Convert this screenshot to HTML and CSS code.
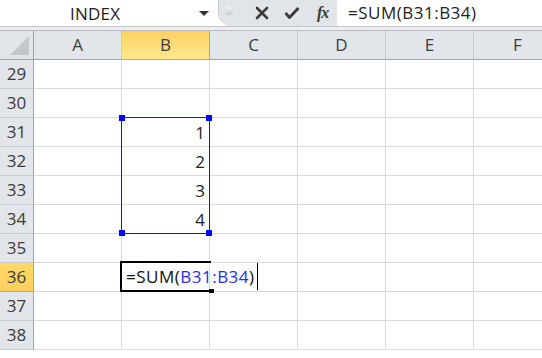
FILE: index.html
```html
<html>

<head>
  <link rel="stylesheet" href="styles.css">
</head>

<body>
  <div class="fbar">
    <div class="namebox">
      <span class="name">INDEX</span>
      <span class="arrow"></span>
    </div>
    <div class="pill">
      <span class="dot"></span>
      <svg class="ico" width="14" height="14" viewBox="0 0 14 14">
        <path d="M2 2 L12 12 M12 2 L2 12" stroke="#3a3a3a" stroke-width="2.6" stroke-linecap="round" />
      </svg>
      <svg class="ico" width="16" height="14" viewBox="0 0 16 14">
        <path d="M1.5 7 L5.5 11.5 L14.5 2" stroke="#3a3a3a" stroke-width="2.8" fill="none" stroke-linejoin="round" />
      </svg>
      <span class="fx">fx</span>
    </div>
    <div class="formula">=SUM(B31:B34)</div>
  </div>
  <div class="gap"></div>

  <div class="sheet">
    <div class="row head">
      <div class="rh corner"><span class="tri"></span></div>
      <div class="ch">A</div>
      <div class="ch sel">B</div>
      <div class="ch">C</div>
      <div class="ch">D</div>
      <div class="ch">E</div>
      <div class="ch">F</div>
    </div>
    <div id="rows"></div>
  </div>

  <script>
    const values = { 31: "1", 32: "2", 33: "3", 34: "4" };
    const rows = document.getElementById("rows");
    for (let r = 29; r <= 38; r++) {
      const row = document.createElement("div");
      row.className = "row";
      let cells = `<div class="rh${r === 36 ? " on" : ""}">${r}</div>`;
      for (let c = 0; c < 6; c++) {
        let inner = "";
        if (c === 1 && values[r]) inner = values[r];
        if (c === 1 && r === 31) {
          inner += `<div class="range"><i class="h tl"></i><i class="h tr"></i><i class="h bl"></i><i class="h br"></i></div>`;
        }
        if (c === 1 && r === 36) {
          inner = `<div class="edit">=SUM(<span class="ref">B31:B34</span>)<span class="caret"></span><i class="fill"></i></div>`;
        }
        cells += `<div class="cell">${inner}</div>`;
      }
      row.innerHTML = cells;
      rows.appendChild(row);
    }
  </script>
</body>

</html>
```

FILE: styles.css
```css
body {
  margin: 0;
  height: 358px;
  overflow: hidden;
  background-color: white;
  font-family: "Open Sans", "Noto Sans", sans-serif;
  color: #222;
}

.fbar {
  display: flex;
  height: 26px;
  border-bottom: 1px solid #c3c7cc;
  background-color: white;
}

.namebox {
  width: 218px;
  display: flex;
  align-items: center;
  position: relative;
}

.name {
  margin-left: 70px;
  font-size: 17px;
  letter-spacing: 0.2px;
}

.arrow {
  position: absolute;
  left: 199px;
  top: 11px;
  border-left: 5px solid transparent;
  border-right: 5px solid transparent;
  border-top: 5px solid #333;
}

.pill {
  width: 119px;
  box-sizing: border-box;
  background-color: #e1e4e8;
  border-left: 1px solid #c3c7cc;
  border-radius: 0 0 0 14px;
  display: flex;
  align-items: center;
}

.dot {
  width: 8px;
  height: 8px;
  border-radius: 4px;
  margin-left: 6px;
  margin-top: -4px;
  background: linear-gradient(#f4f5f6, #c4c8cd);
}

.ico {
  margin-left: 22px;
}

.ico + .ico {
  margin-left: 15px;
}

.fx {
  margin-left: 17px;
  font-family: "Liberation Serif", serif;
  font-style: italic;
  font-weight: bold;
  font-size: 16px;
  color: #3a3a3a;
  letter-spacing: -1px;
}

.formula {
  flex: 1;
  padding-left: 11px;
  font-size: 17px;
  line-height: 26px;
  letter-spacing: 0.5px;
}

.gap {
  height: 3px;
  background-color: #eceef1;
}

.row {
  display: flex;
  height: 29px;
}

.rh {
  width: 34px;
  flex-shrink: 0;
  box-sizing: border-box;
  background-color: #e2e5e9;
  border-right: 1px solid #9fa4ab;
  border-bottom: 1px solid #c7cbd0;
  text-align: center;
  font-size: 17px;
  line-height: 28px;
  color: #3c3c3c;
}

.rh.on {
  background: linear-gradient(#ffd865, #fcd060);
  border-right: 1px solid #e2a234;
  border-bottom: 1px solid #e2a234;
}

.head {
  border-top: 1px solid #b9bdc2;
  height: 29px;
}

.head .rh {
  line-height: 27px;
  border-bottom: 1px solid #9fa4ab;
  position: relative;
}

.tri {
  position: absolute;
  right: 4px;
  bottom: 4px;
  border-left: 19px solid transparent;
  border-bottom: 19px solid #c3c6ca;
}

.ch {
  width: 88px;
  flex-shrink: 0;
  box-sizing: border-box;
  background-color: #e2e5e9;
  border-right: 1px solid #c7cbd0;
  border-bottom: 1px solid #9fa4ab;
  text-align: center;
  font-size: 17px;
  line-height: 27px;
  color: #3c3c3c;
}

.ch.sel {
  background: linear-gradient(#fdd062, #ffe98c);
  border-right: 1px solid #e2a234;
  border-bottom: 1px solid #e2a234;
}

.cell {
  width: 88px;
  flex-shrink: 0;
  box-sizing: border-box;
  border-right: 1px solid #d9d9d9;
  border-bottom: 1px solid #d9d9d9;
  text-align: right;
  padding-right: 4px;
  font-size: 17px;
  line-height: 30px;
  position: relative;
}

.range {
  position: absolute;
  z-index: 2;
  left: -1px;
  top: -1px;
  width: 89px;
  height: 117px;
  border: 1px solid #1010ff;
  box-sizing: border-box;
}

.h {
  position: absolute;
  width: 6px;
  height: 6px;
  background-color: #0000ff;
}

.tl { left: -3px; top: -3px; }
.tr { right: -3px; top: -3px; }
.bl { left: -3px; bottom: -3px; }
.br { right: -3px; bottom: -3px; }

.edit {
  position: absolute;
  z-index: 2;
  left: -2px;
  top: -2px;
  width: 91px;
  height: 31px;
  box-sizing: border-box;
  border: 2px solid black;
  border-right: none;
  text-align: left;
  padding-left: 4px;
  line-height: 27px;
  white-space: nowrap;
  letter-spacing: 0.5px;
  color: #111;
}

.ref {
  color: #2b2bf0;
}

.caret {
  display: inline-block;
  width: 1px;
  height: 27px;
  background-color: black;
  vertical-align: top;
  margin-left: 2px;
}

.fill {
  position: absolute;
  right: -3px;
  bottom: -3px;
  width: 5px;
  height: 4px;
  background-color: black;
}
```
